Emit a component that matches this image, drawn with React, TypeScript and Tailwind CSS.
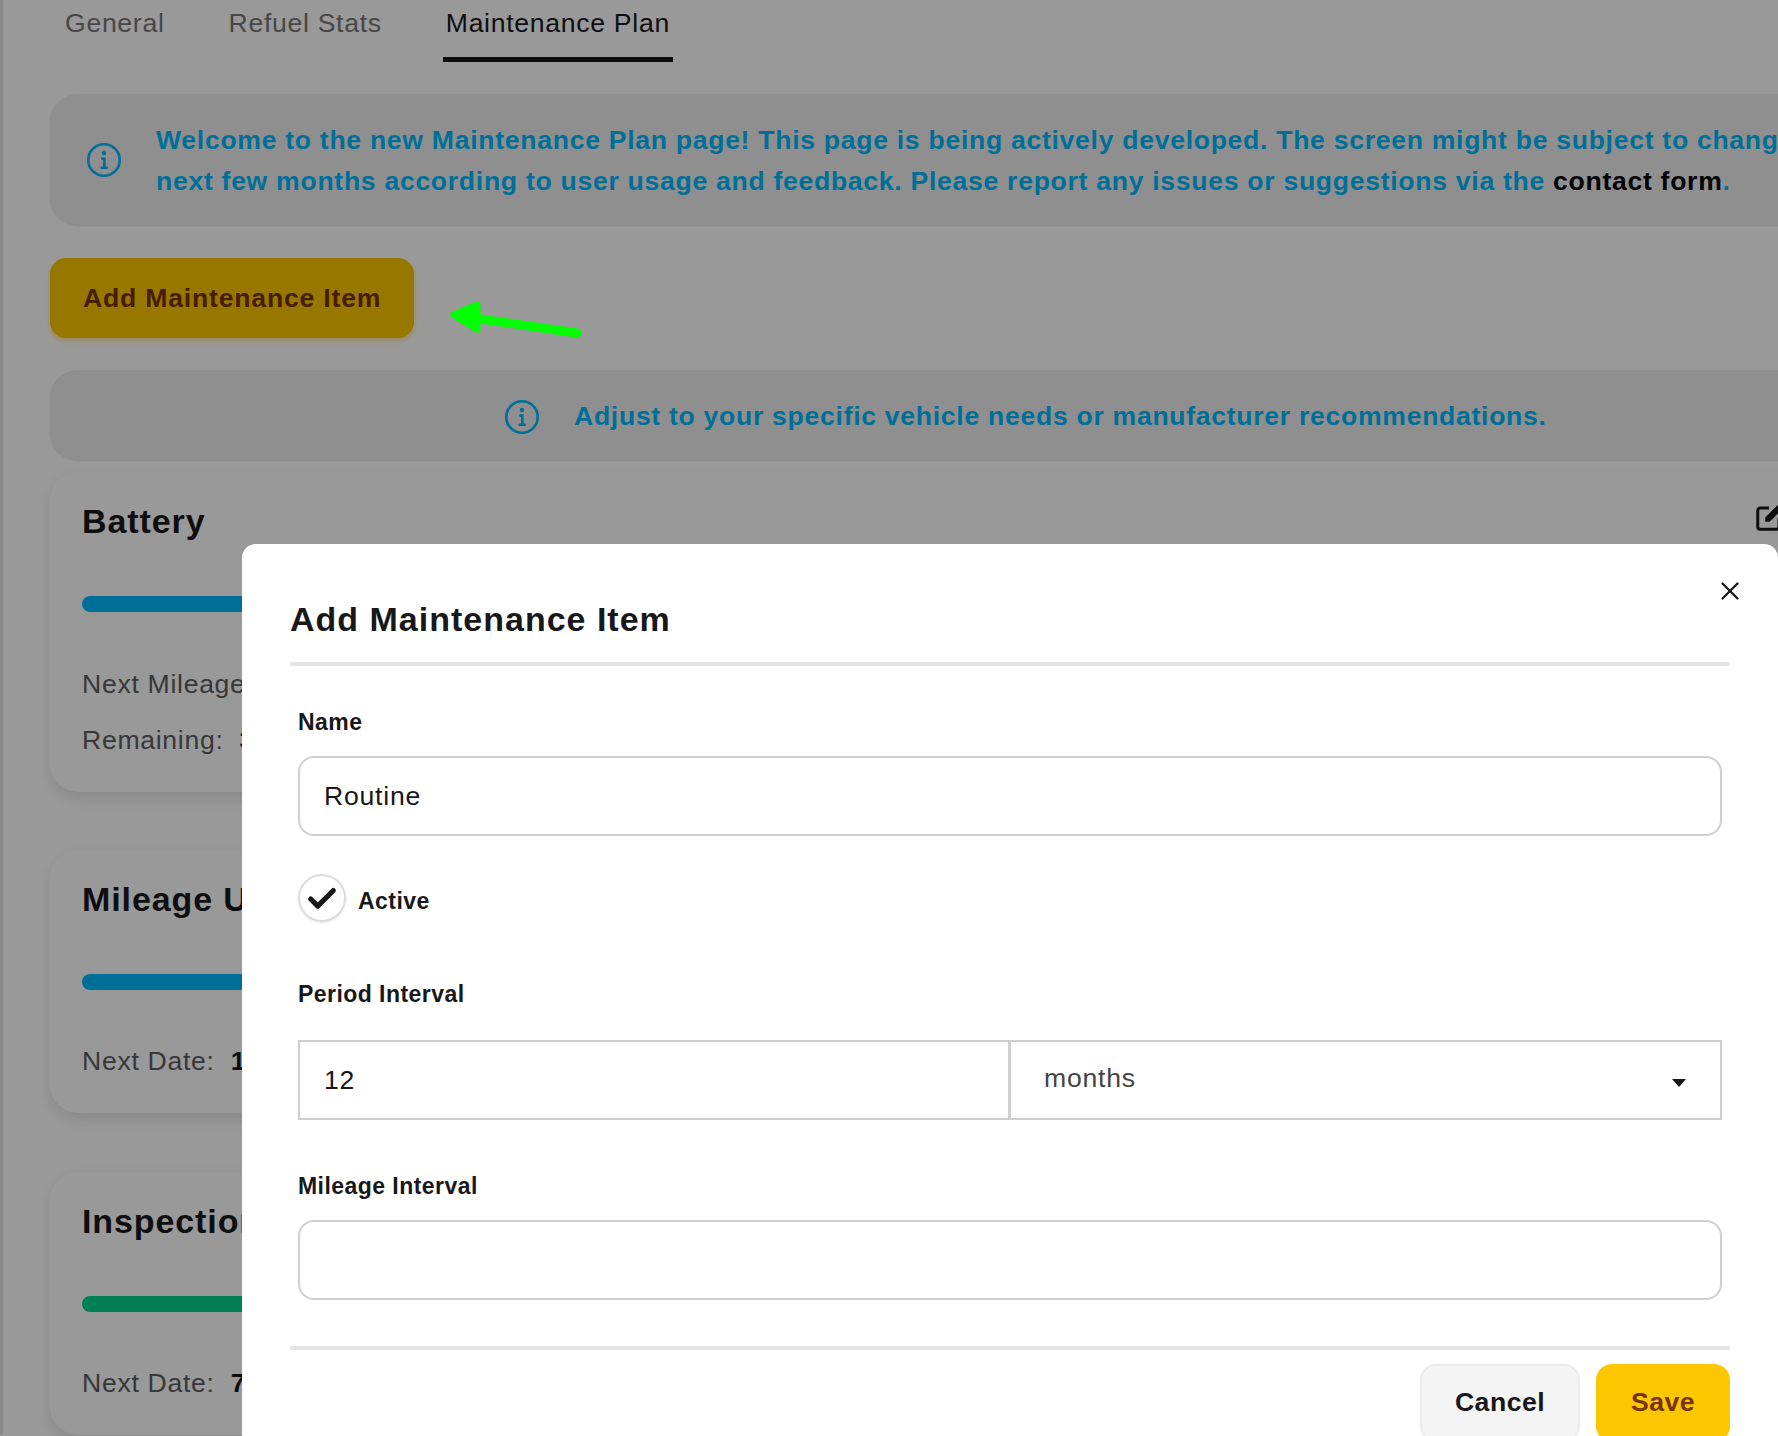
import { Check, X } from 'lucide-react'

const font = { fontFamily: '"Liberation Sans", Arial, sans-serif' }

function InfoIcon({ className }: { className?: string }) {
  return (
    <svg viewBox="0 0 24 24" fill="none" stroke="currentColor" strokeWidth="1.5" className={className}>
      <circle cx="12" cy="12" r="9" />
      <path d="M11 11.2h1.2v5M10.6 16.4h3" strokeLinecap="round" />
      <circle cx="12" cy="8" r="0.5" fill="currentColor" />
    </svg>
  )
}

function EditIcon() {
  return (
    <svg viewBox="0 0 24 24" className="w-[30px] h-[30px] text-[#18181b] shrink-0" fill="none" stroke="currentColor" strokeWidth="2.4">
      <path d="M12 4H5a2 2 0 0 0-2 2v13a2 2 0 0 0 2 2h13a2 2 0 0 0 2-2v-7" />
      <path d="M9 15v-3.5L19 1.5l3.5 3.5L12.5 15z" fill="currentColor" stroke="none" />
    </svg>
  )
}

const cards = [
  { title: 'Battery', bar: 'bg-[#00bafe]', rows: [['Next Mileage:', '30,000'], ['Remaining:', '3,000']], gap: 'mt-[10px]', rowsGap: 'mt-[52px]' },
  { title: 'Mileage Update', bar: 'bg-[#00bafe]', rows: [['Next Date:', '1/1/2026']], gap: 'mt-[58px]', rowsGap: 'mt-[51px]' },
  { title: 'Inspection', bar: 'bg-[#00d390]', rows: [['Next Date:', '7/1/2026']], gap: 'mt-[59px]', rowsGap: 'mt-[51px]' },
]

function MaintenanceCard({ c }: { c: (typeof cards)[number] }) {
  return (
    <div className={`${c.gap} bg-white rounded-[28px] px-[32px] pt-[29px] pb-[32px] shadow-[0_6px_14px_rgba(0,0,0,0.1)]`}>
      <h2 className="h-[40px] text-[34px] leading-[40px] font-bold text-[#18181b] tracking-[0.9px]">{c.title}</h2>
      <div className={`mt-[55px] h-[16px] rounded-full ${c.bar}`} />
      <div className={`${c.rowsGap} flex flex-col gap-[16px]`}>
        {c.rows.map(r => (
          <p key={r[0]} className="text-[26.6px] leading-[40px] text-[#5d5d5f] tracking-[0.7px] flex gap-[16px]">
            {r[0]}
            <span className="font-semibold text-[#18181b]">{r[1]}</span>
          </p>
        ))}
      </div>
    </div>
  )
}

const inputCls = 'border-2 border-[#cfcfcf] bg-white text-[26.6px] tracking-[0.76px] text-[#18181b] outline-none'
const labelCls = 'block text-[23px] leading-[30px] font-bold text-[#18181b] tracking-[0.45px]'

export default function App() {
  return (
    <div style={font} className="relative w-[1778px] h-[1436px] overflow-hidden bg-white">
      {/* page under the dialog, wider than the window */}
      <div className="w-[2100px] border-l-[3px] border-[#e6e6e6] pl-[47px]">
        <div className="flex gap-[64px] pl-[15px] h-[62px] text-[26.6px] tracking-[0.7px] text-[#777]">
          <span className="pt-[4px]">General</span>
          <span className="pt-[4px]">Refuel Stats</span>
          <span className="pt-[4px] text-[#18181b] border-b-[5px] border-[#18181b] -mx-[3px] px-[3px]">Maintenance Plan</span>
        </div>
        <div className="mt-[32px] h-[131px] rounded-[28px] bg-[#eeeeee] shadow-[0_1px_2px_rgba(0,0,0,0.1)] flex items-center pl-[38px] gap-[36px]">
          <InfoIcon className="w-[42px] h-[42px] text-[#00bafe] -mx-[5px]" />
          <p className="text-[26.6px] leading-[41px] font-bold text-[#00bafe] tracking-[0.7px] whitespace-nowrap pt-[3px]">
            Welcome to the new Maintenance Plan page! This page is being actively developed. The screen might be subject to change in the
            <br />
            next few months according to user usage and feedback. Please report any issues or suggestions via the <span className="text-black">contact form</span>.
          </p>
        </div>
        <button className="mt-[33px] h-[80px] w-[364px] rounded-[16px] bg-[#fcc600] text-[#793205] text-[26.6px] tracking-[0.8px] font-bold text-left pl-[33px] pt-[2px] block shadow-[0_3px_5px_rgba(252,198,0,0.4)]">
          Add Maintenance Item
        </button>
        <div className="mt-[32px] h-[90px] rounded-[28px] bg-[#eeeeee] shadow-[0_1px_2px_rgba(0,0,0,0.1)] flex items-center pl-[456px] pt-[3px] gap-[36px]">
          <InfoIcon className="w-[42px] h-[42px] text-[#00bafe] -mx-[5px]" />
          <p className="text-[26.6px] font-bold text-[#00bafe] tracking-[0.7px] whitespace-nowrap">Adjust to your specific vehicle needs or manufacturer recommendations.</p>
        </div>
        <div className="pt-[2px]">
          {cards.map(c => <MaintenanceCard key={c.title} c={c} />)}
        </div>
      </div>

      <div className="absolute left-[1754px] top-[503px]"><EditIcon /></div>

      {/* backdrop */}
      <div className="absolute inset-0 bg-black/40" />

      {/* marker someone drew on the screenshot */}
      <svg className="absolute left-[440px] top-[285px] w-[150px] h-[60px]" viewBox="0 0 150 60" fill="none" stroke="#00ff00" strokeLinecap="round" strokeLinejoin="round">
        <path d="M20 31 L137 48" strokeWidth="9" />
        <path d="M37 20 L14 30 L37 44 Z" strokeWidth="7" fill="#00ff00" />
      </svg>

      {/* dialog */}
      <div className="absolute left-[242px] top-[544px] w-[1536px] h-[892px] bg-white rounded-t-[14px] px-[48px] pt-[55px]">
        <button className="absolute right-[33px] top-[32px] text-[#18181b]"><X size={30} strokeWidth={1.8} /></button>
        <h3 className="text-[34px] leading-[40px] font-bold text-[#18181b] tracking-[1px]">Add Maintenance Item</h3>
        <div className="mt-[23px] h-[4px] bg-[#e5e5e5]" />
        <form className="px-[8px]">
          <label className={`${labelCls} mt-[41px]`}>Name</label>
          <input readOnly value="Routine" className={`${inputCls} w-full mt-[19px] h-[80px] rounded-[16px] px-[24px] block`} />
          <div className="mt-[38px] flex items-center gap-[12px]">
            <span className="w-[48px] h-[48px] rounded-full border-2 border-[#dcdcdc] shadow-[0_1px_2px_rgba(0,0,0,0.1)] flex items-center justify-center shrink-0">
              <Check size={34} strokeWidth={3.6} className="text-[#18181b] shrink-0 mt-[2px]" />
            </span>
            <span className="text-[23px] font-bold text-[#18181b] tracking-[0.45px] pt-[6px]">Active</span>
          </div>
          <label className={`${labelCls} mt-[57px]`}>Period Interval</label>
          <div className="mt-[31px] flex">
            <input readOnly value="12" className={`${inputCls} h-[80px] px-[24px] w-[712px]`} />
            <div className="border-2 -ml-[1px] border-[#cfcfcf] flex-1 h-[80px] flex items-center justify-between pl-[33px] pr-[34px] text-[26.6px] tracking-[0.76px] text-[#444]">
              <span className="-mt-[2px]">months</span>
              <svg viewBox="0 0 14 8" className="w-[14px] h-[8px] mt-[6px] text-[#18181b]"><path d="M0 0h14L7 8z" fill="currentColor" /></svg>
            </div>
          </div>
          <label className={`${labelCls} mt-[51px]`}>Mileage Interval</label>
          <input readOnly className={`${inputCls} w-full mt-[19px] h-[80px] rounded-[16px] block`} />
        </form>
        <div className="mt-[46px] h-[4px] bg-[#e5e5e5]" />
        <div className="mt-[14px] flex justify-end gap-[16px]">
          <button className="w-[160px] h-[78px] rounded-[16px] bg-[#f4f4f4] border-2 border-[#ebebeb] text-[26.6px] tracking-[0.5px] font-bold text-[#18181b]">Cancel</button>
          <button className="w-[134px] h-[78px] rounded-[16px] bg-[#fcc600] text-[26.6px] tracking-[0.5px] font-bold text-[#793205]">Save</button>
        </div>
      </div>
    </div>
  )
}
